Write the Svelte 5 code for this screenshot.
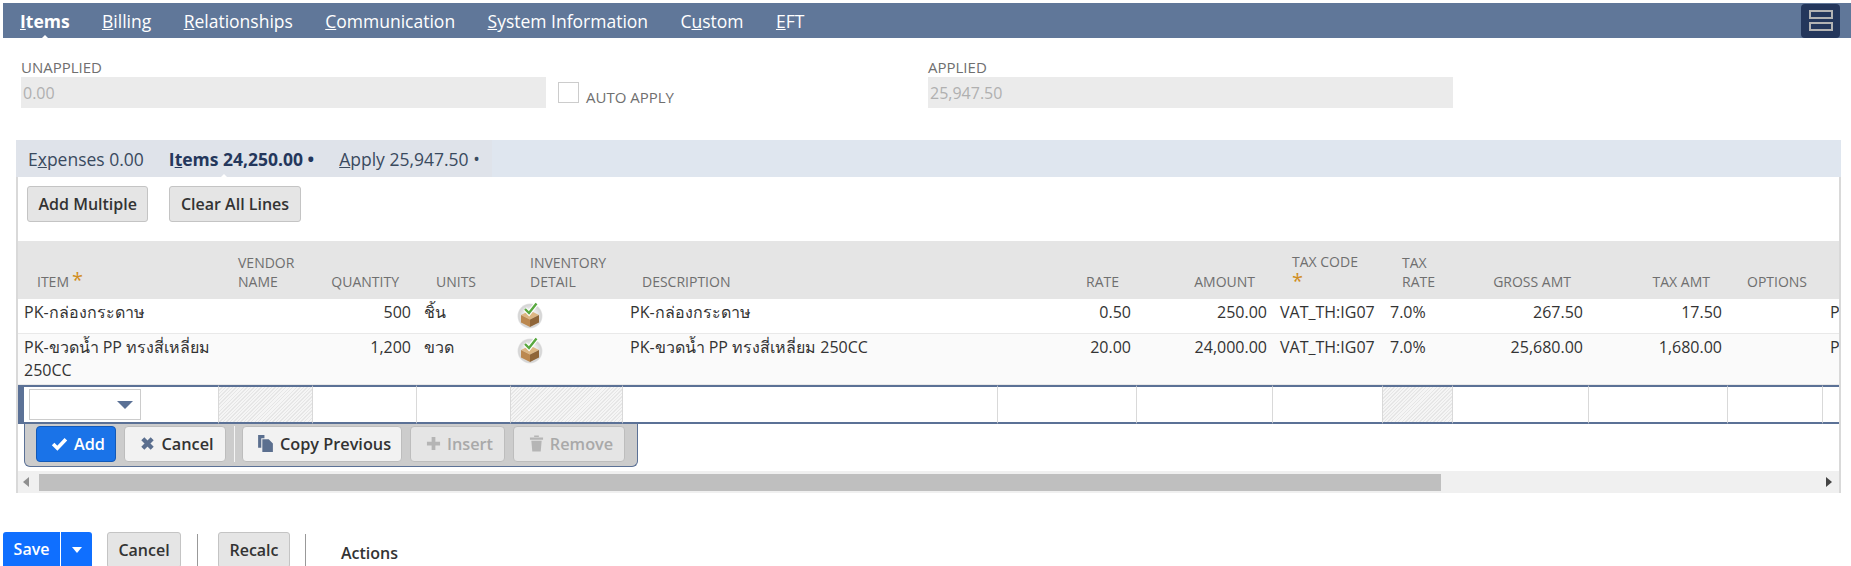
<script lang="ts">
  const navTabs = [
    { pre: '', key: 'I', post: 'tems', active: true },
    { pre: '', key: 'B', post: 'illing' },
    { pre: '', key: 'R', post: 'elationships' },
    { pre: '', key: 'C', post: 'ommunication' },
    { pre: '', key: 'S', post: 'ystem Information' },
    { pre: 'C', key: 'u', post: 'stom' },
    { pre: '', key: 'E', post: 'FT' }
  ];

  // label, width, alignment, hatched in the edit row
  const columns = [
    { label: 'Item', w: 200, req: true },
    { label: 'Vendor Name', w: 94, hatch: true },
    { label: 'Quantity', w: 104, right: true },
    { label: 'Units', w: 94 },
    { label: 'Inventory Detail', w: 112, hatch: true },
    { label: 'Description', w: 375 },
    { label: 'Rate', w: 139, right: true },
    { label: 'Amount', w: 136, right: true },
    { label: 'Tax Code', w: 110, req: true, taxcode: true },
    { label: 'Tax Rate', w: 70, hatch: true },
    { label: 'Gross Amt', w: 136, right: true },
    { label: 'Tax Amt', w: 139, right: true },
    { label: 'Options', w: 95 },
    { label: '', w: 120 }
  ];

  const rows = [
    ['PK-กล่องกระดาษ', '', '500', 'ชิ้น', 'icon', 'PK-กล่องกระดาษ', '0.50', '250.00', 'VAT_TH:IG07', '7.0%', '267.50', '17.50', '', 'PK'],
    ['PK-ขวดน้ำ PP ทรงสี่เหลี่ยม 250CC', '', '1,200', 'ขวด', 'icon', 'PK-ขวดน้ำ PP ทรงสี่เหลี่ยม 250CC', '20.00', '24,000.00', 'VAT_TH:IG07', '7.0%', '25,680.00', '1,680.00', '', 'PK']
  ];
</script>

<div class="page">
  <nav class="main-tabs">
    {#each navTabs as t}
      <span class="main-tab" class:active={t.active}>{t.pre}<u>{t.key}</u>{t.post}</span>
    {/each}
    <button class="layout-toggle" aria-label="Toggle layout">
      <span></span><span></span>
    </button>
  </nav>

  <section class="fields">
    <div class="field">
      <label for="unapplied">UNAPPLIED</label>
      <input id="unapplied" value="0.00" disabled />
    </div>
    <div class="auto-apply">
      <span class="checkbox"></span>
      <span class="auto-label">AUTO APPLY</span>
    </div>
    <div class="field applied">
      <label for="applied">APPLIED</label>
      <input id="applied" value="25,947.50" disabled />
    </div>
  </section>

  <section class="panel">
    <div class="sub-tabs">
      <div class="sub-tabs-group">
        <span class="sub-tab">E<u>x</u>penses 0.00</span>
        <span class="sub-tab active">I<u>t</u>ems 24,250.00 <i>•</i></span>
        <span class="sub-tab"><u>A</u>pply 25,947.50 <i>•</i></span>
      </div>
    </div>

    <div class="panel-body">
      <div class="top-buttons">
        <button class="btn-grey">Add Multiple</button>
        <button class="btn-grey">Clear All Lines</button>
      </div>

      <div class="grid-scroll">
        <table>
          <colgroup>
            {#each columns as c}
              <col style="width: {c.w}px" />
            {/each}
          </colgroup>
          <thead>
            <tr>
              {#each columns as c}
                <th class:right={c.right} class:taxcode={c.taxcode}>
                  {c.label}{#if c.req}{#if c.taxcode}<br />{/if}<span class="req">*</span>{/if}
                </th>
              {/each}
            </tr>
          </thead>
          <tbody>
            {#each rows as row, r}
              <tr class:alt={r === 1}>
                {#each row as cell, i}
                  <td class:right={columns[i].right}>
                    {#if cell === 'icon'}
                      <svg class="inv-icon" viewBox="0 0 26 28" width="26" height="28">
                        <defs>
                          <radialGradient id="halo{r}" cx="50%" cy="50%" r="50%">
                            <stop offset="0.55" stop-color="#ececec" />
                            <stop offset="0.9" stop-color="#d4d4d4" />
                            <stop offset="1" stop-color="#e6e6e6" />
                          </radialGradient>
                        </defs>
                        <circle cx="13" cy="15" r="12.5" fill="url(#halo{r})" />
                        <path d="M13 9.5 L22 14 L13 18.5 L4 14 Z" fill="#dcb683" />
                        <path d="M4 14 L13 18.5 L13 26 L4 21.5 Z" fill="#bb8850" />
                        <path d="M22 14 L13 18.5 L13 26 L22 21.5 Z" fill="#8f6538" />
                        <path d="M8 8 L12 12 L19.5 2.5" fill="none" stroke="#fff" stroke-width="4.5" />
                        <path d="M8 8 L12 12 L19.5 2.5" fill="none" stroke="#58a83f" stroke-width="2.4" />
                      </svg>
                    {:else}
                      {cell}
                    {/if}
                  </td>
                {/each}
              </tr>
            {/each}
            <tr class="edit-row">
              {#each columns as c, i}
                <td class:hatch={c.hatch}>
                  {#if i === 0}
                    <div class="select-box"><span class="caret"></span></div>
                  {/if}
                </td>
              {/each}
            </tr>
          </tbody>
        </table>
      </div>

      <div class="line-actions">
        <button class="act primary">
          <svg viewBox="0 0 16 16" width="17" height="17"><path d="M2 8.5 L6 12.5 L14 4" fill="none" stroke="#fff" stroke-width="3.4" /></svg>
          Add
        </button>
        <button class="act">
          <svg viewBox="0 0 16 16" width="15" height="15"><path d="M3 3 L13 13 M13 3 L3 13" stroke="#5b6f8f" stroke-width="4.6" /></svg>
          Cancel
        </button>
        <span class="act-sep"></span>
        <button class="act">
          <svg viewBox="0 0 16 18" width="17" height="19"><path d="M1 1 H7 V4 H4 V13 H1 Z M5 5 H11 L15 9 V17 H5 Z" fill="#5b6f8f" /></svg>
          Copy Previous
        </button>
        <button class="act off">
          <svg viewBox="0 0 16 16" width="15" height="15"><path d="M8 1 V15 M1 8 H15" stroke="#b5b5b5" stroke-width="4" /></svg>
          Insert
        </button>
        <button class="act off">
          <svg viewBox="0 0 16 18" width="15" height="19"><path d="M1 2.5 H15 V5 H1 Z M5.5 0.5 H10.5 V2 H5.5 Z M2.5 6 H13.5 L12.5 17.5 H3.5 Z" fill="#b5b5b5" /></svg>
          Remove
        </button>
      </div>

      <div class="h-scroll">
        <span class="arrow left"></span>
        <span class="thumb"></span>
        <span class="arrow right"></span>
      </div>
    </div>
  </section>

  <footer class="page-actions">
    <div class="save-group">
      <button class="save">Save</button>
      <button class="save-more" aria-label="More save options"><span></span></button>
    </div>
    <button class="btn-grey foot cancel">Cancel</button>
    <span class="foot-sep first"></span>
    <button class="btn-grey foot recalc">Recalc</button>
    <span class="foot-sep"></span>
    <span class="actions-label">Actions</span>
  </footer>
</div>

<style>
  :global(html), :global(body) {
    margin: 0;
    height: 566px;
    overflow: hidden;
    background: #fff;
  }

  .page {
    padding-top: 3px;
    width: 1851px;
    height: 563px;
    overflow: hidden;
    font-family: "Open Sans", "Noto Sans", sans-serif;
    font-size: 16px;
    color: #333;
  }

  button {
    font-family: inherit;
    cursor: pointer;
  }

  /* main tab bar */
  .main-tabs {
    display: flex;
    align-items: center;
    gap: 32.4px;
    height: 35px;
    margin-left: 3px;
    padding-left: 17px;
    padding-right: 11px;
    background: #607799;
    color: #fff;
    font-size: 17.5px;
  }

  .main-tab {
    position: relative;
  }

  .main-tab.active {
    font-weight: 700;
  }

  .main-tab.active::after {
    content: '';
    position: absolute;
    left: 50%;
    bottom: -8px;
    margin-left: -6px;
    border: 6px solid transparent;
    border-top: 0;
    border-bottom-color: #fff;
  }

  .layout-toggle {
    margin-left: auto;
    width: 39px;
    height: 34px;
    padding: 0;
    border: 0;
    border-radius: 4px;
    background: #24375c;
    display: flex;
    flex-direction: column;
    align-items: center;
    justify-content: center;
    gap: 3px;
  }

  .layout-toggle span {
    width: 20px;
    height: 5px;
    border: 2px solid #b3b3b3;
    box-sizing: content-box;
  }

  /* summary fields */
  .fields {
    display: flex;
    height: 102px;
    padding: 19px 0 0 21px;
    box-sizing: border-box;
  }

  .field label {
    display: block;
    height: 20px;
    line-height: 20px;
    font-size: 15px;
    color: #6f6f6f;
  }

  .field input {
    display: block;
    width: 525px;
    height: 31px;
    margin: 0;
    padding: 0 0 0 2px;
    box-sizing: border-box;
    border: 0;
    background: #ebebeb;
    color: #b0b0b0;
    font: inherit;
    font-size: 16px;
    opacity: 1;
  }

  .auto-apply {
    display: flex;
    margin: 25px 0 0 12px;
    width: 370px;
  }

  .checkbox {
    width: 19px;
    height: 19px;
    border: 1px solid #ccc;
    background: #fff;
  }

  .auto-label {
    margin: 5px 0 0 7px;
    font-size: 15px;
    color: #6f6f6f;
  }

  /* subtab panel */
  .panel {
    width: 1825px;
    margin-left: 16px;
    height: 353px;
    box-sizing: border-box;
  }

  .sub-tabs {
    height: 37px;
    background: #dfe6ef;
  }

  .sub-tabs-group {
    display: inline-flex;
    align-items: center;
    gap: 25px;
    width: 476px;
    box-sizing: border-box;
    height: 37px;
    padding: 0 0 0 12px;
    background: #dfe3ea;
    color: #3a4a5e;
    font-size: 17.5px;
  }

  .sub-tab {
    position: relative;
    white-space: nowrap;
  }

  .sub-tab i {
    font-style: normal;
  }

  .sub-tab.active {
    font-weight: 700;
    color: #24375c;
  }

  .sub-tab.active::after {
    content: '';
    position: absolute;
    left: 50%;
    bottom: -9px;
    margin-left: -24px;
    border: 6px solid transparent;
    border-top: 0;
    border-bottom-color: #fff;
  }

  .panel-body {
    border: 2px solid #d9d9d9;
    border-top: 0;
    height: 316px;
    box-sizing: border-box;
  }

  .top-buttons {
    display: flex;
    gap: 21px;
    padding: 9px 0 0 9px;
    height: 64px;
    box-sizing: border-box;
  }

  .btn-grey {
    height: 36px;
    padding: 0 10.5px;
    border: 1px solid #c4c4c4;
    border-radius: 3px;
    background: #e5e5e5;
    color: #333;
    font-size: 16px;
    font-weight: 600;
  }

  /* line items table */
  .grid-scroll {
    overflow: hidden;
  }

  table {
    table-layout: fixed;
    width: 1924px;
    border-collapse: separate;
    border-spacing: 0;
  }

  th {
    height: 58px;
    padding: 0 0 8px 20px;
    box-sizing: border-box;
    background: #e5e5e5;
    vertical-align: bottom;
    text-align: left;
    font-size: 14px;
    font-weight: 400;
    line-height: 19px;
    text-transform: uppercase;
    color: #6f6f6f;
  }

  th:first-child {
    padding-left: 19px;
  }

  th.right {
    padding: 0 17px 8px 0;
    text-align: right;
  }

  th.taxcode {
    padding-bottom: 6px;
    line-height: 21px;
  }

  .req {
    margin-left: 3px;
    color: #d18e1f;
    font-size: 20px;
    line-height: 14px;
  }

  th.taxcode .req {
    margin-left: 0;
  }

  td {
    padding: 2px 7px 2px 8px;
    vertical-align: top;
    line-height: 23px;
    border-bottom: 1px solid #e9e9e9;
    overflow: hidden;
  }

  tbody tr:first-child td {
    height: 35px;
    box-sizing: border-box;
  }

  td:first-child {
    padding-left: 6px;
    padding-right: 1px;
  }

  td.right {
    padding-left: 0;
    padding-right: 5px;
    text-align: right;
  }

  tr.alt td {
    background: #fafafa;
  }

  .inv-icon {
    display: block;
    margin-left: -1px;
  }

  .edit-row td {
    height: 39px;
    box-sizing: border-box;
    padding: 0;
    border-top: 2px solid #5b7196;
    border-bottom: 2px solid #5b7196;
    border-left: 1px solid #d9d9d9;
    background: #fff;
  }

  .edit-row td:first-child {
    border-left: 6px solid #5b7196;
    padding: 2px 0 0 5px;
    vertical-align: top;
  }

  .edit-row td.hatch {
    background: repeating-linear-gradient(-45deg, #e6e6e6 0 1px, #f5f5f5 1px 2.5px);
  }

  .select-box {
    position: relative;
    width: 112px;
    height: 31px;
    box-sizing: border-box;
    border: 1px solid #ccc;
    background: #fff;
  }

  .caret {
    position: absolute;
    right: 7px;
    top: 11px;
    border: 8px solid transparent;
    border-bottom: 0;
    border-top: 8px solid #5b7196;
  }

  /* line action bar */
  .line-actions {
    display: flex;
    align-items: center;
    gap: 8px;
    width: 614px;
    height: 43px;
    margin-left: 6px;
    padding: 0 0 3px 11px;
    box-sizing: border-box;
    background: #ccc;
    border: 1px solid #5b7196;
    border-top: 0;
    border-radius: 0 0 6px 6px;
  }

  .act {
    display: flex;
    align-items: center;
    justify-content: center;
    gap: 6px;
    height: 36px;
    padding: 0 0 0 4px;
    border: 1px solid #bdbdbd;
    border-radius: 4px;
    background: #f2f2f2;
    color: #333;
    font-size: 16.3px;
    font-weight: 600;
  }

  .act:nth-child(1) { width: 80px; }
  .act:nth-child(2) { width: 102px; }
  .act:nth-child(4) { width: 160px; margin-left: -1px; }
  .act:nth-child(5) { width: 95px; }
  .act:nth-child(6) { width: 112px; }

  .act.primary {
    background: #1a73e8;
    border-color: #1259b8;
    color: #fff;
  }

  .act.off {
    background: #e5e5e5;
    color: #a9a9a9;
  }

  .act-sep {
    width: 1px;
    height: 36px;
    background: #f4f4f4;
  }

  .h-scroll {
    position: relative;
    height: 22px;
    margin-top: 4px;
    background: #f0f0f0;
    display: flex;
    align-items: center;
  }

  .thumb {
    position: absolute;
    left: 21px;
    top: 3px;
    width: 1402px;
    height: 17px;
    background: #bfbfbf;
  }

  .arrow {
    position: absolute;
    top: 6px;
    border: 5px solid transparent;
  }

  .arrow.left {
    left: 5px;
    border-left: 0;
    border-right: 6px solid #8f8f8f;
  }

  .arrow.right {
    right: 7px;
    border-right: 0;
    border-left: 6px solid #444;
  }

  /* bottom page actions */
  .page-actions {
    display: flex;
    align-items: flex-start;
    margin: 39px 0 0 3px;
  }

  .save-group {
    display: flex;
    margin-right: 15px;
  }

  .save, .save-more {
    height: 36px;
    border: 0;
    background: #0f6fff;
    color: #fff;
    font-size: 16px;
    font-weight: 600;
  }

  .save {
    width: 57px;
    padding: 0 0 2px;
    border-radius: 3px 0 0 3px;
  }

  .save-more {
    width: 31px;
    padding: 0;
    margin-left: 1px;
    border-radius: 0 3px 3px 0;
  }

  .save-more span {
    display: block;
    margin: 0 auto;
    width: 0;
    border: 5px solid transparent;
    border-bottom: 0;
    border-top: 6px solid #fff;
  }

  .btn-grey.foot {
    height: 36px;
  }

  .cancel { width: 74px; padding: 0; }
  .recalc { width: 72px; padding: 0; }

  .foot-sep {
    width: 1px;
    height: 34px;
    margin: 2px 0 0 0;
    background: #999;
  }

  .foot-sep.first {
    margin: 2px 20px 0 16px;
  }

  .recalc + .foot-sep {
    margin-left: 15px;
  }

  .actions-label {
    margin: 10px 0 0 35px;
    font-size: 16px;
    font-weight: 600;
    color: #333;
  }
</style>
